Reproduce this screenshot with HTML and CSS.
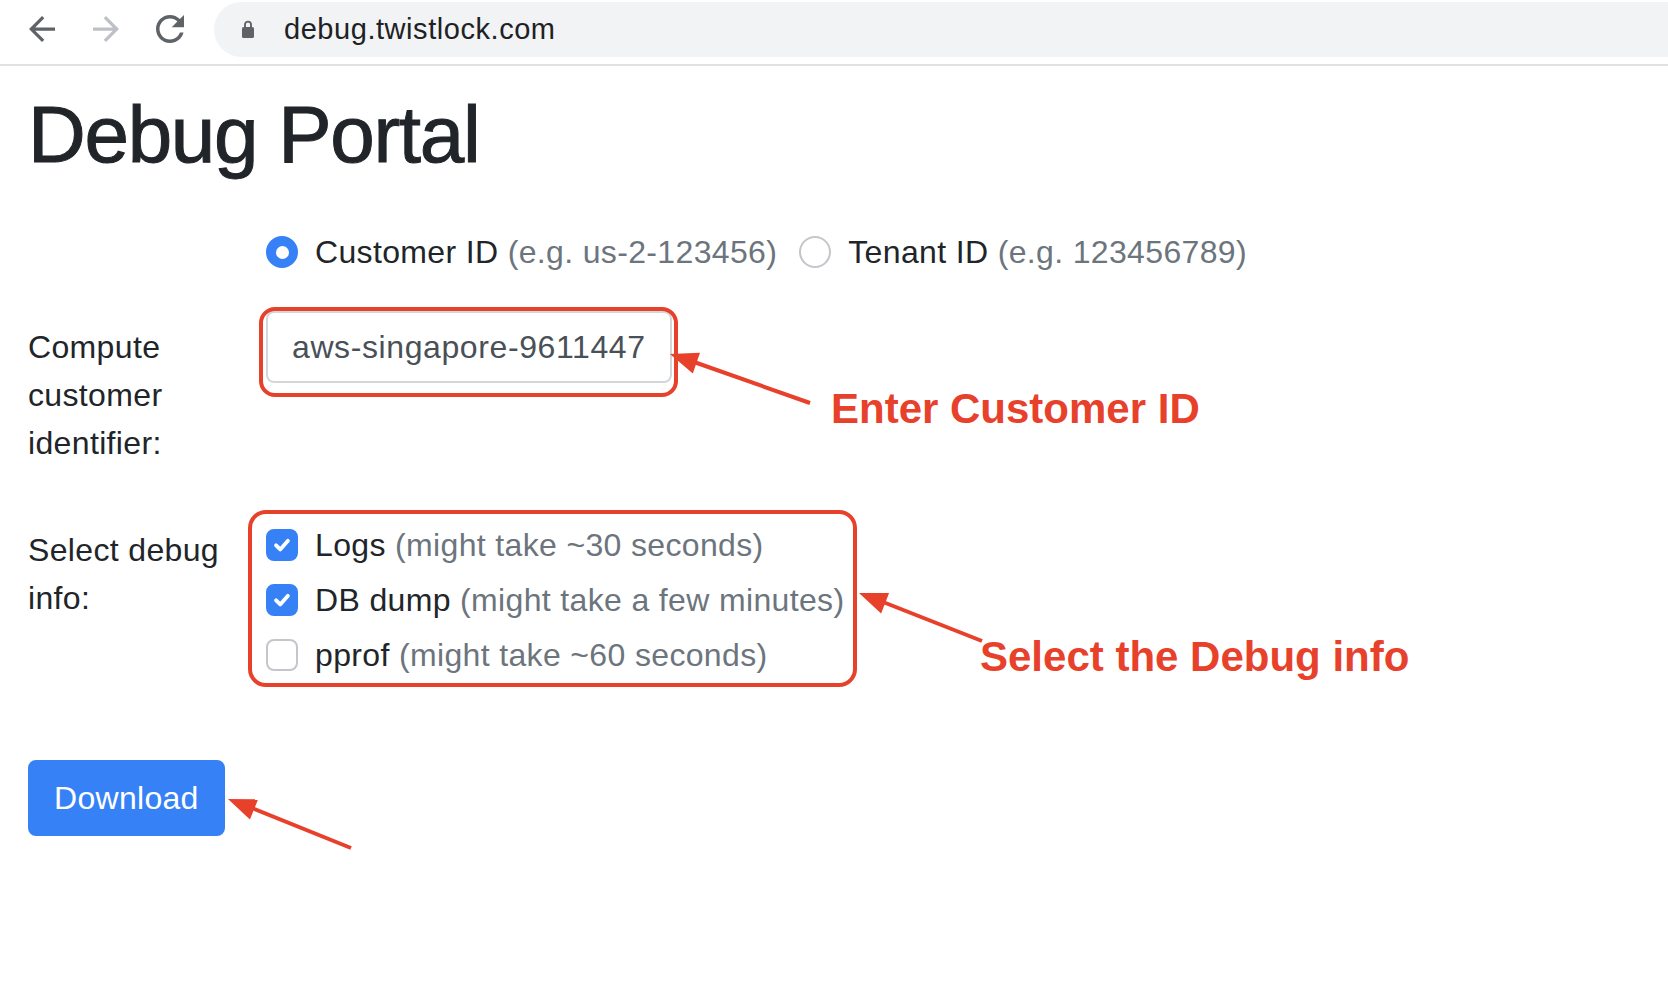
FILE: index.html
```html
<!DOCTYPE html>
<html lang="en">
<head>
<meta charset="utf-8">
<title>Debug Portal</title>
<link rel="stylesheet" href="styles.css">
</head>
<body>
<div class="screen">
  <header class="chrome">
    <svg class="nav nav-back" width="26" height="26" viewBox="4 4 16 16"><path d="M20 11H7.83l5.59-5.59L12 4l-8 8 8 8 1.41-1.41L7.83 13H20v-2z"/></svg>
    <svg class="nav nav-fwd" width="26" height="26" viewBox="4 4 16 16"><path d="M12 4l-1.41 1.41L16.17 11H4v2h12.17l-5.58 5.59L12 20l8-8z"/></svg>
    <svg class="nav nav-reload" width="28" height="28" viewBox="4 4 16 16"><path d="M17.65 6.35C16.2 4.9 14.21 4 12 4c-4.42 0-7.99 3.58-7.99 8s3.57 8 7.99 8c3.73 0 6.84-2.55 7.730-6h-2.08c-.82 2.33-3.04 4-5.65 4-3.31 0-6-2.69-6-6s2.69-6 6-6c1.66 0 3.14.69 4.22 1.78L13 11h7V4l-2.35 2.35z"/></svg>
    <div class="omnibox">
      <svg class="lock" width="12" height="18" viewBox="0 0 12 18"><path d="M3 7.5V4.6a3 3 0 0 1 6 0v2.9" fill="none" stroke="#5f6368" stroke-width="1.9"/><rect x="0" y="7" width="12" height="11" rx="1.6" fill="#5f6368"/></svg>
      <span class="url">debug.twistlock.com</span>
    </div>
  </header>

  <main class="page">
    <h1 class="title">Debug Portal</h1>
    <form class="form">
      <div class="row row-radios">
        <div class="field-label"></div>
        <div class="radios">
          <label class="opt opt-inline"><span class="radio radio-on"></span><span class="opt-text">Customer ID <span class="muted">(e.g. us-2-123456)</span></span></label>
          <label class="opt opt-inline"><span class="radio"></span><span class="opt-text">Tenant ID <span class="muted">(e.g. 123456789)</span></span></label>
        </div>
      </div>

      <div class="row row-input">
        <div class="field-label">Compute customer identifier:</div>
        <div class="field">
          <input class="control" type="text" value="aws-singapore-9611447">
        </div>
      </div>

      <div class="row row-checks">
        <div class="field-label">Select debug info:</div>
        <div class="checks">
          <label class="opt"><span class="box box-on"><svg width="32" height="32" viewBox="0 0 20 20"><path d="m6.3 10.2 2.6 2.6 4.8-5.4" fill="none" stroke="#fff" stroke-width="2.4" stroke-linecap="round" stroke-linejoin="round"/></svg></span><span class="opt-text">Logs <span class="muted">(might take ~30 seconds)</span></span></label>
          <label class="opt"><span class="box box-on"><svg width="32" height="32" viewBox="0 0 20 20"><path d="m6.3 10.2 2.6 2.6 4.8-5.4" fill="none" stroke="#fff" stroke-width="2.4" stroke-linecap="round" stroke-linejoin="round"/></svg></span><span class="opt-text">DB dump <span class="muted">(might take a few minutes)</span></span></label>
          <label class="opt"><span class="box"></span><span class="opt-text">pprof <span class="muted">(might take ~60 seconds)</span></span></label>
        </div>
      </div>

      <button class="btn" type="button">Download</button>
    </form>
  </main>

  <svg class="annot" width="1668" height="994" viewBox="0 0 1668 994">
    <g fill="none" stroke="#e8412b" stroke-width="4">
      <rect x="261" y="309" width="415" height="86" rx="14"/>
      <rect x="250" y="512" width="605" height="173" rx="16"/>
      <line x1="810" y1="403" x2="694" y2="362"/>
      <line x1="982" y1="641" x2="883" y2="602"/>
      <line x1="351" y1="848" x2="252" y2="808"/>
    </g>
    <g fill="#e8412b">
      <polygon points="670,354 692.8,373.6 700,352.8"/>
      <polygon points="859,593 881.1,613.5 889.1,593"/>
      <polygon points="228,799 249.9,819.6 258.1,799.2"/>
    </g>
  </svg>
  <div class="note note-id">Enter Customer ID</div>
  <div class="note note-debug">Select the Debug info</div>
</div>
</body>
</html>
```

FILE: styles.css
```css
* { box-sizing: border-box; }

html, body {
  margin: 0;
  padding: 0;
  background: #ffffff;
}

body {
  font-family: "Liberation Sans", Arial, sans-serif;
  color: #212529;
}

.screen {
  position: relative;
  width: 1668px;
  height: 994px;
  overflow: hidden;
}

/* Browser chrome */
.chrome {
  display: flex;
  align-items: center;
  height: 66px;
  padding-bottom: 6px;
  border-bottom: 2px solid #dfe1e5;
}

.nav { flex: none; }
.nav-back { margin-left: 29px; fill: #5f6368; }
.nav-fwd { margin-left: 38px; fill: #bdc1c6; }
.nav-reload { margin-left: 37px; fill: #5f6368; }

.omnibox {
  flex: 1;
  display: flex;
  align-items: center;
  height: 55px;
  margin-left: 30px;
  padding-left: 28px;
  background: #f1f3f4;
  border-radius: 28px 0 0 28px;
}

.lock { flex: none; }

.url {
  margin-left: 30px;
  font-size: 29px;
  color: #202124;
  letter-spacing: 0.55px;
}

/* Page */
.page {
  padding: 0 28px;
}

.title {
  margin: 21px 0 45px;
  font-size: 80px;
  line-height: 96px;
  font-weight: 400;
  letter-spacing: -1.3px;
  -webkit-text-stroke: 1px #212529;
  color: #212529;
}

.form {
  margin: 0;
  font-size: 32px;
  line-height: 48px;
  letter-spacing: 0.35px;
}

.row {
  display: grid;
  grid-template-columns: 238px 1fr;
}

.row-input { margin-top: 34px; }
.row-checks { margin-top: 32px; }

.field-label {
  padding: 13px 30px 13px 0;
}

.row-radios .field-label { padding: 0; }
.row-checks .field-label { padding-top: 14px; }

.radios {
  display: flex;
  align-items: center;
}

.opt {
  display: flex;
  align-items: center;
  height: 48px;
}

.opt-inline { margin-right: 22px; }

.opt-text { margin-left: 17px; white-space: nowrap; }

.muted { color: #6c757d; }

.radio {
  flex: none;
  width: 32px;
  height: 32px;
  border-radius: 50%;
  border: 2px solid #c3c6ca;
  display: flex;
  align-items: center;
  justify-content: center;
}

.radio-on {
  background: #3781f7;
  border-color: #3781f7;
}

.radio-on::after {
  content: "";
  width: 13px;
  height: 13px;
  border-radius: 50%;
  background: #ffffff;
}

.field { padding-top: 1px; }

.control {
  display: block;
  width: 406px;
  height: 72px;
  padding: 0 24px;
  border: 2px solid #d4d7da;
  border-radius: 8px;
  font-family: "Liberation Sans", Arial, sans-serif;
  font-size: 32px;
  letter-spacing: 0.6px;
  color: #495057;
  background: #ffffff;
  outline: none;
}

.checks {
  display: flex;
  flex-direction: column;
  gap: 7px;
  padding-top: 9px;
}

.box {
  flex: none;
  width: 32px;
  height: 32px;
  border-radius: 8px;
  border: 2px solid #c3c6ca;
  display: flex;
  align-items: center;
  justify-content: center;
}

.box svg { flex: none; }

.box-on {
  background: #3781f7;
  border-color: #3781f7;
}

.btn {
  display: block;
  margin-top: 81px;
  padding: 12px 24px;
  border: 2px solid #3781f7;
  border-radius: 8px;
  background: #3781f7;
  color: #ffffff;
  font-family: "Liberation Sans", Arial, sans-serif;
  font-size: 32px;
  line-height: 48px;
  letter-spacing: 0.3px;
}

/* Annotations overlay */
.annot {
  position: absolute;
  left: 0;
  top: 0;
  pointer-events: none;
}

.note {
  position: absolute;
  font-size: 42px;
  line-height: 42px;
  font-weight: 700;
  color: #e8412b;
  white-space: nowrap;
}

.note-id { left: 831px; top: 388px; }
.note-debug { left: 980px; top: 636px; }
```
